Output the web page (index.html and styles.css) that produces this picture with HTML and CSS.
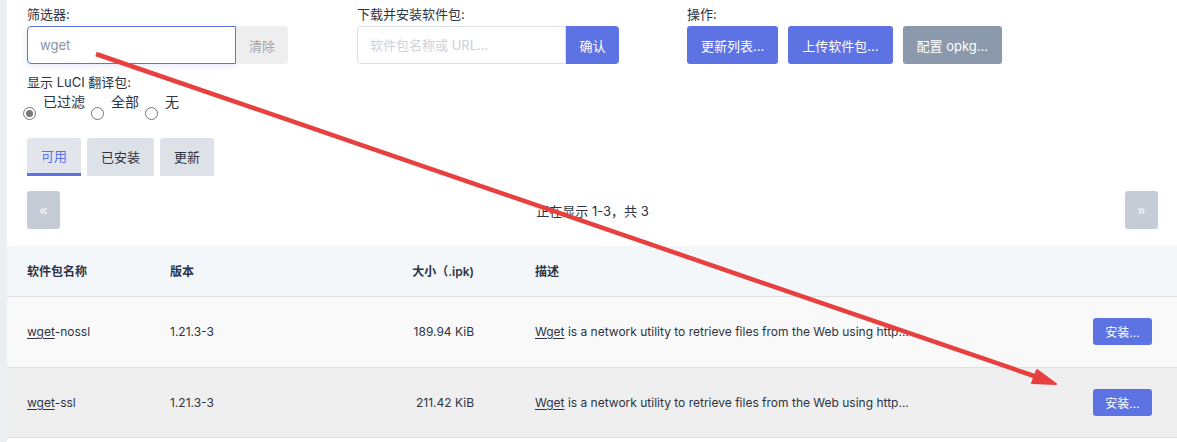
FILE: index.html
```html
<!DOCTYPE html>
<html lang="zh">
<head>
  <meta charset="UTF-8">
  <title>软件包</title>
  <link rel="stylesheet" href="styles.css">
</head>
<body>
  <div class="side"></div>
  <div class="main">
    <div class="controls">
      <div class="group">
        <label class="lbl">筛选器:</label>
        <div class="field">
          <input class="txt focus" type="text" value="wget">
          <button class="btn btn-clear">清除</button>
        </div>
        <label class="lbl lbl-sub">显示 LuCI 翻译包:</label>
        <div class="radios">
          <span class="radio checked"></span><span class="rlabel">已过滤</span>
          <span class="radio"></span><span class="rlabel">全部</span>
          <span class="radio"></span><span class="rlabel">无</span>
        </div>
      </div>
      <div class="group">
        <label class="lbl">下载并安装软件包:</label>
        <div class="field">
          <input class="txt" type="text" placeholder="软件包名称或 URL...">
          <button class="btn btn-blue btn-ok">确认</button>
        </div>
      </div>
      <div class="group">
        <label class="lbl">操作:</label>
        <div class="actions">
          <button class="btn btn-blue btn-act">更新列表...</button>
          <button class="btn btn-blue btn-act">上传软件包...</button>
          <button class="btn btn-gray btn-act">配置 opkg...</button>
        </div>
      </div>
    </div>

    <div class="tabs">
      <div class="tab active">可用</div>
      <div class="tab">已安装</div>
      <div class="tab">更新</div>
    </div>

    <div class="pager">
      <button class="pbtn">«</button>
      <span class="pinfo">正在显示 1-3，共 3</span>
      <button class="pbtn">»</button>
    </div>

    <table class="pkgs">
      <tr class="head">
        <th class="c-name">软件包名称</th>
        <th class="c-ver">版本</th>
        <th class="c-size">大小（.ipk)</th>
        <th class="c-desc">描述</th>
        <th class="c-act"></th>
      </tr>
      <tr class="odd">
        <td class="c-name"><u>wget</u>-nossl</td>
        <td class="c-ver">1.21.3-3</td>
        <td class="c-size">189.94 KiB</td>
        <td class="c-desc"><u>Wget</u> is a network utility to retrieve files from the Web using http...</td>
        <td class="c-act"><button class="btn btn-blue btn-inst">安装...</button></td>
      </tr>
      <tr class="even">
        <td class="c-name"><u>wget</u>-ssl</td>
        <td class="c-ver">1.21.3-3</td>
        <td class="c-size">211.42 KiB</td>
        <td class="c-desc"><u>Wget</u> is a network utility to retrieve files from the Web using http...</td>
        <td class="c-act"><button class="btn btn-blue btn-inst">安装...</button></td>
      </tr>
    </table>
  </div>

  <svg class="arrow" width="1177" height="442" viewBox="0 0 1177 442">
    <line x1="96" y1="54" x2="1040" y2="378" stroke="#e8403f" stroke-width="4.5" />
    <polygon points="1056,384 1037,370 1032,383" fill="#e8403f" stroke="#e8403f" stroke-width="2" stroke-linejoin="round" />
  </svg>
</body>
</html>
```

FILE: styles.css
```css
body {
  margin: 0;
  font-family: Inter, "Noto Sans CJK SC", sans-serif;
  font-size: 13px;
  color: #2d3344;
  background: #ffffff;
  display: flex;
  overflow: hidden;
  height: 442px;
}
.side {
  width: 7px;
  flex: none;
  background: #eceef2;
}
.main {
  flex: 1;
  padding: 4px 19px 0 20px;
}
.controls {
  display: grid;
  grid-template-columns: 330px 330px 330px;
}
.lbl {
  display: block;
  line-height: 20px;
  height: 22px;
}
.lbl-sub {
  margin-top: 8px;
}
.field {
  display: flex;
  height: 38px;
}
.txt {
  width: 209px;
  box-sizing: border-box;
  border: 1px solid #dde0e6;
  border-radius: 4px 0 0 4px;
  padding: 0 12px;
  font-family: inherit;
  font-size: 13px;
  color: #8892a6;
  outline: none;
}
.txt::placeholder {
  color: #ccd1da;
}
.txt.focus {
  border-color: #5b73e3;
  box-shadow: 0 2px 6px rgba(91, 115, 227, 0.15);
}
.btn {
  border: none;
  font-family: inherit;
  font-size: 13px;
  color: #fff;
  cursor: pointer;
}
.btn-clear {
  width: 52px;
  background: #eeeeee;
  color: #a0a4ab;
  border-radius: 0 4px 4px 0;
}
.btn-blue {
  background: #5e73e3;
}
.btn-gray {
  background: #8a99ab;
}
.btn-ok {
  width: 53px;
  border-radius: 0 4px 4px 0;
}
.actions {
  display: flex;
  gap: 10px;
  height: 38px;
}
.btn-act {
  border-radius: 3px;
  padding: 0 14px;
}
.radios {
  display: flex;
  align-items: flex-start;
  height: 40px;
  padding-top: 4px;
}
.radio {
  width: 11px;
  height: 11px;
  border: 1px solid #777;
  border-radius: 50%;
  margin: 9px 7px 0 -4px;
  position: relative;
  background: #fff;
}
.radio.checked::after {
  content: "";
  position: absolute;
  left: 2px;
  top: 2px;
  width: 7px;
  height: 7px;
  border-radius: 50%;
  background: #777;
}
.rlabel {
  font-size: 14px;
  line-height: 16px;
  margin-top: -4px;
  margin-right: 10px;
}
.tabs {
  display: flex;
  gap: 6px;
}
.tab {
  height: 38px;
  line-height: 38px;
  padding: 0 14px;
  background: #dde2e8;
  border-radius: 3px 3px 0 0;
  box-sizing: border-box;
}
.tab.active {
  background: #e2e6ec;
  color: #5b73e3;
  border-bottom: 3px solid #5b73e3;
  line-height: 36px;
}
.pager {
  display: flex;
  align-items: center;
  justify-content: space-between;
  margin-top: 15px;
  height: 38px;
}
.pbtn {
  width: 33px;
  height: 38px;
  border: none;
  border-radius: 3px;
  background: #c5ccd6;
  color: #fff;
  font-size: 14px;
}
.pkgs {
  border-collapse: collapse;
  margin: 17px -19px 0 -20px;
  width: calc(100% + 39px);
}
.pkgs td, .pkgs th {
  font-size: 12px;
  text-align: left;
  border-bottom: 1px solid #dedfe2;
  padding: 0;
}
.pkgs th {
  font-weight: 600;
  color: #2d3344;
}
.head {
  background: #f4f7fa;
  height: 50px;
}
.odd {
  background: #f9f9f9;
  height: 71px;
}
.even {
  background: #efefef;
  height: 70px;
}
.c-name {
  width: 143px;
  padding-left: 20px !important;
}
.c-ver {
  width: 160px;
}
.pkgs .c-size {
  width: 144px;
  text-align: right;
}
.c-desc {
  padding-left: 61px !important;
}
.c-act {
  width: 84px;
}
.btn-inst {
  width: 59px;
  height: 27px;
  border-radius: 3px;
  font-size: 12px;
}
u {
  text-underline-offset: 2px;
}
.arrow {
  position: absolute;
  left: 0;
  top: 0;
  pointer-events: none;
}
```
